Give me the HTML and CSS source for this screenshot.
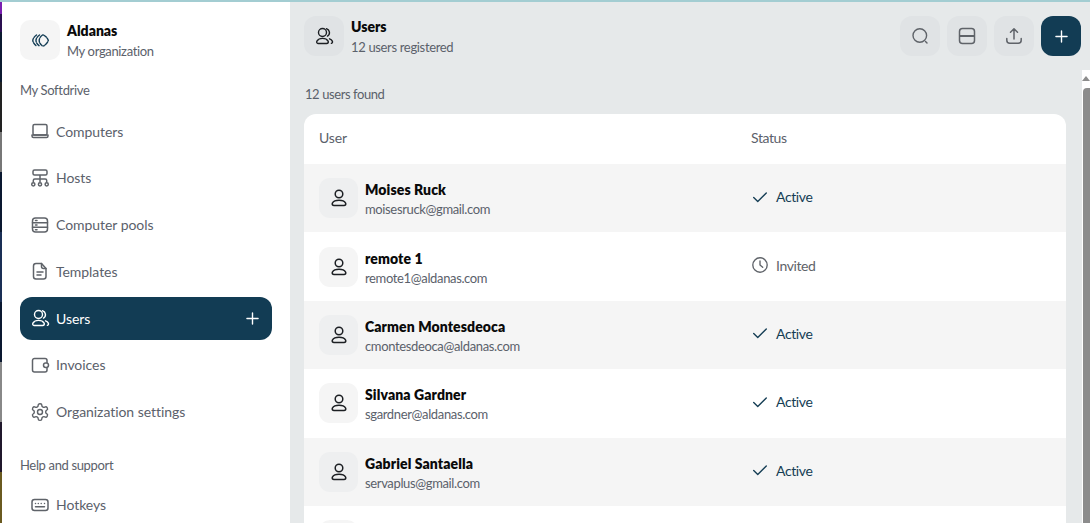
FILE: index.html
```html
<!DOCTYPE html>
<html lang="en">
<head>
<meta charset="utf-8">
<title>Users</title>
<link rel="stylesheet" href="styles.css">
</head>
<body>
<svg class="defs" width="0" height="0" aria-hidden="true">
  <symbol id="i-users" viewBox="0 0 20 20"><g fill="none" stroke="currentColor" stroke-width="1.4" stroke-linecap="round" stroke-linejoin="round"><circle cx="8.500" cy="6.500" r="4"/><path d="M12.500 2.800a4 4 0 0 1 1 7.300"/><path d="M4 17.500h8.600c1.400 0 2.200-1.200 1.500-2.400-.9-1.600-3-2.700-5.600-2.700s-4.600 1.100-5.600 2.700c-.6 1.200.1 2.400 1.100 2.400z"/><path d="M15.500 12.800c1.300.5 2.300 1.300 2.800 2.300.5 1 .1 2-.9 2.300"/></g></symbol>
  <symbol id="i-user" viewBox="0 0 20 20"><g fill="none" stroke="currentColor" stroke-width="1.500" stroke-linecap="round" stroke-linejoin="round"><circle cx="10" cy="6" r="3.800"/><path d="M5 17.500h10c1.500 0 2.200-1.200 1.600-2.400-1-1.700-3.600-2.800-6.600-2.800s-5.600 1.100-6.600 2.800c-.6 1.200.1 2.400 1.600 2.400z"/></g></symbol>
</svg>
<div class="strip"></div>
<aside class="sidebar">
  <div class="org">
    <div class="org-logo">
      <svg width="17" height="13" viewBox="0 0 17 13" fill="none" stroke="#123c54" stroke-width="1.400" stroke-linecap="round" stroke-dasharray="3.400 1.300"><path d="M4.500 1C2.500 2.500 1 4.500.8 6.500 1 8.500 2.500 10.500 4.500 12"/><path d="M7.500 1C5.500 2.500 4 4.500 4 6.500S5.500 10.500 7.500 12"/><path d="M10.500 1C8.500 2.500 7.200 4.500 7.200 6.500S8.500 10.500 10.500 12"/><path d="M11.500 1c2.500 1.500 4.300 3.500 4.800 5.500-.5 2-2.300 4-4.800 5.500"/></svg>
    </div>
    <div class="stack">
      <div class="title">Aldanas</div>
      <div class="sub">My organization</div>
    </div>
  </div>
  <div class="section first">My Softdrive</div>
  <nav class="nav">
    <a class="item"><svg class="ico" viewBox="0 0 20 20" fill="none" stroke="currentColor" stroke-width="1.500" stroke-linejoin="round"><rect x="3" y="3.500" width="14" height="10.500" rx="1.500"/><path d="M2 14h16v1a1.500 1.500 0 0 1-1.500 1.500h-13A1.500 1.500 0 0 1 2 15z"/></svg>Computers</a>
    <a class="item"><svg class="ico" viewBox="0 0 20 20" fill="none" stroke="currentColor" stroke-width="1.500" stroke-linejoin="round"><rect x="3" y="2" width="14" height="5" rx="1.500"/><path d="M10 7v7.500M3.300 14.500v-2A1.500 1.500 0 0 1 4.800 11h10.400a1.500 1.500 0 0 1 1.500 1.500v2"/><circle cx="3.300" cy="16.300" r="1.600"/><circle cx="10" cy="16.300" r="1.600"/><circle cx="16.700" cy="16.300" r="1.600"/></svg>Hosts</a>
    <a class="item"><svg class="ico" viewBox="0 0 20 20" fill="none" stroke="currentColor" stroke-width="1.500" stroke-linecap="round"><rect x="2.500" y="3" width="15" height="14" rx="3"/><path d="M2.500 7.800h15M2.500 12.300h15M5.500 5.500h1.500M5.500 10h1.500M5.500 14.700h1.500"/></svg>Computer pools</a>
    <a class="item"><svg class="ico" viewBox="0 0 20 20" fill="none" stroke="currentColor" stroke-width="1.500" stroke-linecap="round" stroke-linejoin="round"><path d="M6 2.500h5.500l4.500 5v8a2.500 2.500 0 0 1-2.500 2.500h-7.500A2.500 2.500 0 0 1 3.500 15.500V5A2.500 2.500 0 0 1 6 2.500z"/><path d="M11.500 2.500v3a2 2 0 0 0 2 2H16M7 11h6M7 14h4"/></svg>Templates</a>
    <a class="item active"><svg class="ico" viewBox="0 0 20 20"><use href="#i-users"/></svg>Users<svg class="plus" viewBox="0 0 14 14" fill="none" stroke="currentColor" stroke-width="1.500" stroke-linecap="round"><path d="M7 1v12M1 7h12"/></svg></a>
    <a class="item"><svg class="ico" viewBox="0 0 20 20" fill="none" stroke="currentColor" stroke-width="1.500" stroke-linejoin="round"><path d="M17 8V5.500a2 2 0 0 0-2-2H4.500a2 2 0 0 0-2 2V15a2 2 0 0 0 2 2H15a2 2 0 0 0 2-2v-2.500"/><rect x="13.500" y="8" width="5" height="4.500" rx="2.200"/></svg>Invoices</a>
    <a class="item"><svg class="ico" viewBox="0 0 24 24" fill="none" stroke="currentColor" stroke-width="1.700" stroke-linecap="round" stroke-linejoin="round"><path d="M12.220 2h-.44a2 2 0 0 0-2 2v.18a2 2 0 0 1-1 1.730l-.43.250a2 2 0 0 1-2 0l-.150-.080a2 2 0 0 0-2.730.730l-.220.380a2 2 0 0 0 .730 2.730l.150.100a2 2 0 0 1 1 1.720v.510a2 2 0 0 1-1 1.740l-.150.090a2 2 0 0 0-.730 2.730l.220.380a2 2 0 0 0 2.730.730l.150-.080a2 2 0 0 1 2 0l.430.250a2 2 0 0 1 1 1.730V20a2 2 0 0 0 2 2h.44a2 2 0 0 0 2-2v-.18a2 2 0 0 1 1-1.730l.430-.250a2 2 0 0 1 2 0l.150.080a2 2 0 0 0 2.730-.730l.220-.390a2 2 0 0 0-.730-2.730l-.150-.080a2 2 0 0 1-1-1.740v-.500a2 2 0 0 1 1-1.740l.150-.090a2 2 0 0 0 .730-2.730l-.220-.380a2 2 0 0 0-2.730-.730l-.150.080a2 2 0 0 1-2 0l-.430-.250a2 2 0 0 1-1-1.730V4a2 2 0 0 0-2-2z"/><circle cx="12" cy="12" r="3"/></svg>Organization settings</a>
  </nav>
  <div class="section second">Help and support</div>
  <nav class="nav">
    <a class="item"><svg class="ico" viewBox="0 0 20 20" fill="none" stroke="currentColor" stroke-width="1.500" stroke-linecap="round"><rect x="2" y="4.500" width="16" height="11" rx="2.500"/><path d="M5.500 8.500h.01M8.300 8.500h.01M11.200 8.500h.01M14.500 8.500h.01M5.500 11.800h9"/></svg>Hotkeys</a>
  </nav>
</aside>
<main class="main">
  <header class="topbar">
    <div class="tile"><svg class="ico-dark" viewBox="0 0 20 20"><use href="#i-users"/></svg></div>
    <div class="stack">
      <div class="title">Users</div>
      <div class="sub">12 users registered</div>
    </div>
    <div class="actions">
      <button class="tile"><svg class="ico-btn" viewBox="0 0 20 20" fill="none" stroke="currentColor" stroke-width="1.400" stroke-linecap="round"><circle cx="9.800" cy="9.500" r="6.800"/><path d="M15.500 15.500l1.500 1.500"/></svg></button>
      <button class="tile"><svg class="ico-btn" viewBox="0 0 20 20" fill="none" stroke="currentColor" stroke-width="1.500"><rect x="2.500" y="2.500" width="15" height="15" rx="3"/><path d="M2.500 10h15" stroke-width="2"/></svg></button>
      <button class="tile"><svg class="ico-btn" viewBox="0 0 20 20" fill="none" stroke="currentColor" stroke-width="1.500" stroke-linecap="round" stroke-linejoin="round"><path d="M10 13V3M6.500 6.300 10 2.800l3.500 3.500M2.800 12.500v1.800a3 3 0 0 0 3 3h8.400a3 3 0 0 0 3-3v-1.800"/></svg></button>
      <button class="tile primary"><svg class="ico-plus" viewBox="0 0 14 14" fill="none" stroke="currentColor" stroke-width="1.500" stroke-linecap="round"><path d="M7 1v12M1 7h12"/></svg></button>
    </div>
  </header>
  <div class="body">
    <div class="content">
      <div class="found">12 users found</div>
      <section class="table">
        <div class="row head"><div class="col-user">User</div><div class="col-status">Status</div></div>
        <div class="row odd">
          <div class="col-user"><div class="avatar"><svg class="ico-dark" viewBox="0 0 20 20"><use href="#i-user"/></svg></div><div class="stack"><div class="name">Moises Ruck</div><div class="mail">moisesruck@gmail.com</div></div></div>
          <div class="col-status active-state"><svg class="st" viewBox="0 0 20 20" fill="none" stroke="currentColor" stroke-width="1.500" stroke-linecap="round" stroke-linejoin="round"><path d="M3 10.500l4.500 4.500L17 5.500"/></svg>Active</div>
        </div>
        <div class="row">
          <div class="col-user"><div class="avatar"><svg class="ico-dark" viewBox="0 0 20 20"><use href="#i-user"/></svg></div><div class="stack"><div class="name">remote 1</div><div class="mail">remote1@aldanas.com</div></div></div>
          <div class="col-status invited-state"><svg class="st" viewBox="0 0 20 20" fill="none" stroke="currentColor" stroke-width="1.500" stroke-linecap="round" stroke-linejoin="round"><circle cx="10" cy="10" r="8"/><path d="M10 5.500V10l3 2.500"/></svg>Invited</div>
        </div>
        <div class="row odd">
          <div class="col-user"><div class="avatar"><svg class="ico-dark" viewBox="0 0 20 20"><use href="#i-user"/></svg></div><div class="stack"><div class="name">Carmen Montesdeoca</div><div class="mail">cmontesdeoca@aldanas.com</div></div></div>
          <div class="col-status active-state"><svg class="st" viewBox="0 0 20 20" fill="none" stroke="currentColor" stroke-width="1.500" stroke-linecap="round" stroke-linejoin="round"><path d="M3 10.500l4.500 4.500L17 5.500"/></svg>Active</div>
        </div>
        <div class="row">
          <div class="col-user"><div class="avatar"><svg class="ico-dark" viewBox="0 0 20 20"><use href="#i-user"/></svg></div><div class="stack"><div class="name">Silvana Gardner</div><div class="mail">sgardner@aldanas.com</div></div></div>
          <div class="col-status active-state"><svg class="st" viewBox="0 0 20 20" fill="none" stroke="currentColor" stroke-width="1.500" stroke-linecap="round" stroke-linejoin="round"><path d="M3 10.500l4.500 4.500L17 5.500"/></svg>Active</div>
        </div>
        <div class="row odd">
          <div class="col-user"><div class="avatar"><svg class="ico-dark" viewBox="0 0 20 20"><use href="#i-user"/></svg></div><div class="stack"><div class="name">Gabriel Santaella</div><div class="mail">servaplus@gmail.com</div></div></div>
          <div class="col-status active-state"><svg class="st" viewBox="0 0 20 20" fill="none" stroke="currentColor" stroke-width="1.500" stroke-linecap="round" stroke-linejoin="round"><path d="M3 10.500l4.500 4.500L17 5.500"/></svg>Active</div>
        </div>
        <div class="row">
          <div class="col-user"><div class="avatar"></div></div>
        </div>
      </section>
    </div>
    <div class="scrollbar"><div class="arrow"></div><div class="thumb"></div></div>
  </div>
</main>
</body>
</html>
```
FILE: styles.css
```css
* { box-sizing: border-box; }
html, body { margin: 0; height: 100%; overflow: hidden; }
body {
  display: flex;
  font-family: "Lato", sans-serif;
  font-size: 14px;
  color: #5b616b;
  background: #e6e9ea;
  border-top: 2px solid #a3cdd2;
}
.defs { position: absolute; }
.strip {
  width: 2px;
  flex: none;
  background: linear-gradient(#7a1fb0 0 12px, #2a0f50 12px 30px, #0b1a30 30px 80px, #222 80px 130px, #777 130px 170px, #0a1830 170px 230px, #1a2f55 230px 300px, #0a1830 300px 360px, #888 360px 420px, #20182c 420px 470px, #6a5a20 470px);
}
.sidebar {
  width: 288px;
  flex: none;
  background: #fff;
  padding: 18px 18px 0;
  overflow: hidden;
}
.org { display: flex; gap: 7px; align-items: flex-start; }
.org-logo {
  width: 40px; height: 40px;
  border-radius: 10px;
  background: #f5f5f5;
  display: flex; align-items: center; justify-content: center;
  flex: none;
}
.stack { display: flex; flex-direction: column; }
.title { font-weight: 800; font-size: 14px; line-height: 20px; margin-top: 1px; color: #0a0a0a; }
.sub { font-size: 13px; line-height: 20px; letter-spacing: -.34px; color: #5b616b; }
.section { font-size: 13px; line-height: 18px; letter-spacing: -.35px; color: #5b616b; }
.section.first { margin-top: 20px; margin-bottom: 10.500px; }
.section.second { margin-top: 23px; margin-bottom: 9px; }
.nav { display: flex; flex-direction: column; gap: 3.800px; }
.item {
  height: 43px;
  padding: 0 13px 0 10px;
  display: flex;
  align-items: center;
  gap: 6px;
  border-radius: 12px;
  color: #5b616b;
  letter-spacing: -.05px;
}
.item.active { background: #123c54; color: #fff; }
.ico { width: 20px; height: 20px; flex: none; color: #5f6369; }
.active .ico { color: #fff; }
.plus { width: 13px; height: 13px; margin-left: auto; }
.main { flex: 1; min-width: 0; display: flex; flex-direction: column; }
.topbar {
  height: 68px;
  flex: none;
  padding: 14px 9px 0 14px;
  display: flex;
  align-items: flex-start;
  gap: 7px;
}
.tile {
  width: 40px; height: 40px;
  border: 0; padding: 0;
  border-radius: 12px;
  background: #e0e3e5;
  display: flex; align-items: center; justify-content: center;
  flex: none;
  color: #5f6369;
}
.tile.primary { background: #123c54; color: #fff; }
.ico-dark { width: 20px; height: 20px; color: #1c1f23; }
.ico-btn { width: 20px; height: 20px; }
.ico-plus { width: 13px; height: 13px; }
.actions { margin-left: auto; display: flex; gap: 7px; }
.body { flex: 1; min-height: 0; display: flex; }
.content { flex: 1; min-width: 0; overflow: hidden; padding: 0 16px 0 14px; }
.found { font-size: 13px; line-height: 18px; letter-spacing: -.42px; margin: 15px 0 11px 1px; }
.table { background: #fff; border-radius: 12px 12px 0 0; }
.row {
  height: 68.400px;
  display: flex;
  align-items: center;
}
.row.head { height: 50px; letter-spacing: -.15px; padding-bottom: 3px; }
.row.odd { background: #f5f5f5; }
.col-user { width: 447px; padding-left: 15px; display: flex; align-items: center; gap: 7px; flex: none; }
.col-status { display: flex; align-items: center; gap: 7px; letter-spacing: -.4px; padding-bottom: 3px; }
.head .col-status { padding-bottom: 0; }
.avatar {
  width: 39px; height: 40px;
  border-radius: 11px;
  background: #eeeff0;
  display: flex; align-items: center; justify-content: center;
  flex: none;
}
.row:not(.odd) .avatar { background: #f5f5f5; }
.name { font-weight: 800; color: #0a0a0a; line-height: 20px; letter-spacing: .1px; margin-top: 3px; }
.mail { font-size: 13px; line-height: 19px; letter-spacing: -.36px; }
.st { width: 18px; height: 18px; flex: none; }
.active-state { color: #143d54; }
.invited-state { color: #5f6369; }
.scrollbar { width: 8px; flex: none; background: #fff; display: flex; flex-direction: column; align-items: center; }
.arrow {
  width: 0; height: 0;
  margin-top: 6px;
  border-left: 4px solid transparent;
  border-right: 4px solid transparent;
  border-bottom: 5px solid #8c8c8c;
}
.thumb { flex: 1; width: 7px; margin: 7px 0 0 1px; background: #8c8c8c; border-radius: 4px 0 0 0; }
```
